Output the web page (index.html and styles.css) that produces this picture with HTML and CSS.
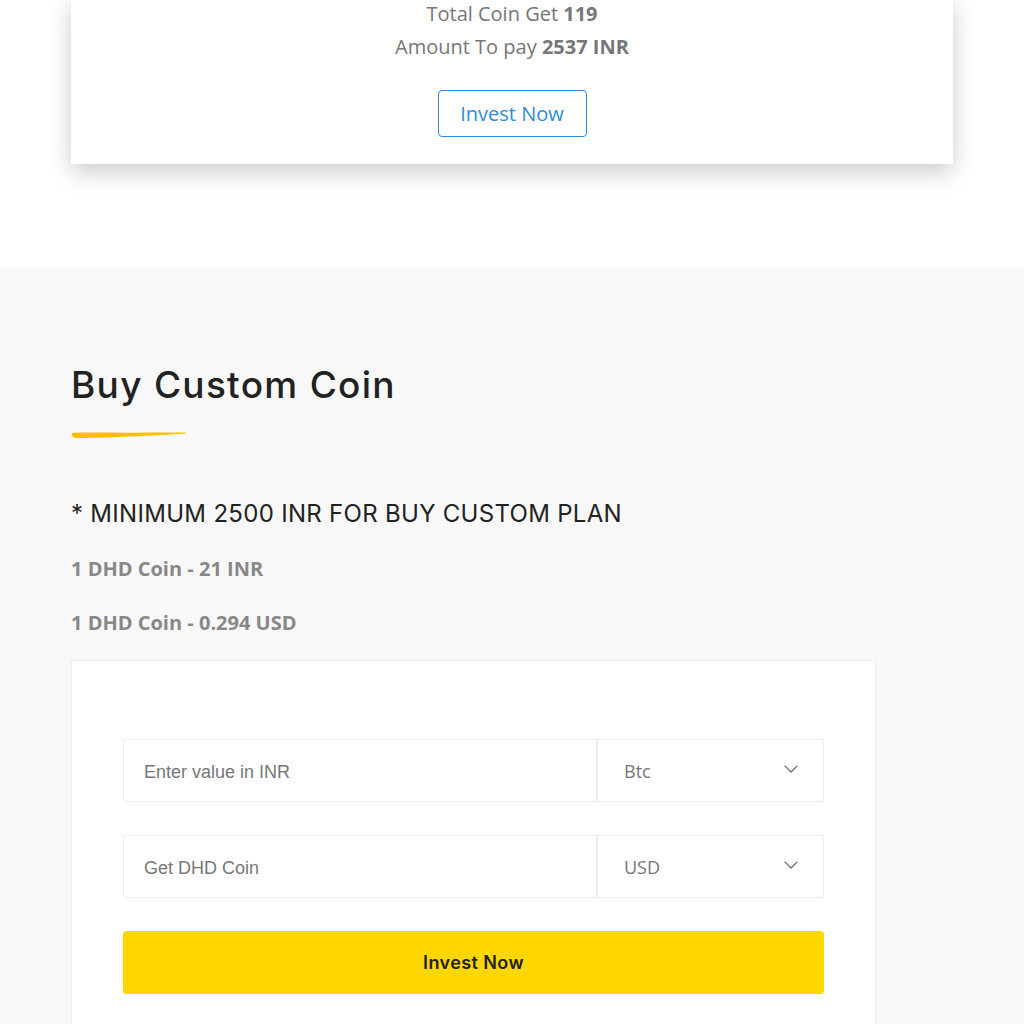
FILE: index.html
```html
<!DOCTYPE html>
<html>
<head>
<meta charset="utf-8">
<link rel="stylesheet" href="styles.css">
</head>
<body>
<section class="plans">
  <div class="container">
    <div class="plan-card">
      <p class="plan-line">Total Coin Get <b>119</b></p>
      <p class="plan-line">Amount To pay <b>2537 INR</b></p>
      <a class="btn-outline" href="#">Invest Now</a>
    </div>
  </div>
</section>
<section class="custom">
  <div class="container">
    <h2 class="title">Buy Custom Coin</h2>
    <svg class="brush" width="116" height="8" viewBox="0 0 116 8">
      <path d="M1 2.2 C 3 1.2, 20 1.4, 40 1.6 C 70 1.8, 95 1.2, 115 1.6 L 115 2.6 C 100 3.6, 80 4.6, 60 5.6 C 40 6.6, 20 7.2, 6 7 C 2 6.8, 0 5, 1 2.2 Z" fill="#ffbf00"/>
    </svg>
    <h3 class="notice">* MINIMUM 2500 INR FOR BUY CUSTOM PLAN</h3>
    <p class="rate">1 DHD Coin - 21 INR</p>
    <p class="rate">1 DHD Coin - 0.294 USD</p>
    <div class="form-box">
      <div class="form-row">
        <input class="field" type="text" placeholder="Enter value in INR">
        <div class="select"><span>Btc</span>
          <svg width="14" height="8" viewBox="0 0 14 8"><path d="M0.7 0.7 L7 7 L13.3 0.7" fill="none" stroke="#777" stroke-width="1.4"/></svg>
        </div>
      </div>
      <div class="form-row">
        <input class="field" type="text" placeholder="Get DHD Coin">
        <div class="select"><span>USD</span>
          <svg width="14" height="8" viewBox="0 0 14 8"><path d="M0.7 0.7 L7 7 L13.3 0.7" fill="none" stroke="#777" stroke-width="1.4"/></svg>
        </div>
      </div>
      <button class="btn-yellow" type="button">Invest Now</button>
    </div>
  </div>
</section>
</body>
</html>
```

FILE: styles.css
```css
* { box-sizing: border-box; }
html, body { margin: 0; padding: 0; background: #fff; overflow: hidden; }
body { font-family: "Open Sans", "Noto Sans", sans-serif; }

.container { width: 882px; margin: 0 auto; }

.plans { height: 267px; background: #fff; display: flow-root; }
.plan-card {
  margin-top: -3px;
  background: #fff;
  box-shadow: 0 8px 22px rgba(0,0,0,0.2);
  text-align: center;
  padding: 0 0 27px;
}
.plan-line {
  margin: 0;
  font-size: 20px;
  line-height: 33px;
  color: #777;
}
.plan-line b { font-weight: 700; color: #777; }
.btn-outline {
  display: inline-block;
  margin-top: 27px;
  width: 149px;
  height: 47px;
  line-height: 45px;
  border: 1px solid #2a8de0;
  border-radius: 4px;
  color: #2a8de0;
  font-size: 20px;
  text-decoration: none;
}

.custom {
  background: #f8f8f8;
  padding-top: 97px;
  height: 757px;
}
.title {
  margin: 0;
  font-family: Inter, "Noto Sans", sans-serif;
  font-weight: 500;
  font-size: 37px;
  line-height: 42px;
  color: #222;
  letter-spacing: 1.3px;
}
.brush { display: block; margin-top: 25px; }
.notice {
  margin: 59px 0 0;
  font-family: Inter, "Noto Sans", sans-serif;
  font-weight: 400;
  font-size: 24px;
  line-height: 32px;
  color: #222;
  letter-spacing: 0.3px;
}
.rate {
  margin: 0;
  font-size: 20px;
  font-weight: 700;
  color: #888;
  line-height: 28px;
}
.notice + .rate { margin-top: 25px; }
.rate + .rate { margin-top: 26px; }

.form-box {
  margin-top: 23px;
  width: 805px;
  background: #fff;
  border: 1px solid #eee;
  padding: 78px 51px 60px;
  display: flex;
  flex-direction: column;
  gap: 33px;
}
.form-row { display: flex; height: 63px; }
.field {
  flex: 0 0 474px;
  height: 63px;
  border: 1px solid #eee;
  padding: 3px 20px 0;
  font-family: "Liberation Sans", Arial, sans-serif;
  font-size: 18px;
  color: #333;
  background: #fff;
  outline: none;
}
.field::placeholder { color: #777; }
.select {
  flex: 1;
  height: 63px;
  border: 1px solid #eee;
  display: flex;
  align-items: center;
  justify-content: space-between;
  padding: 0 25px 0 26px;
  font-size: 18px;
  color: #777;
}
.select svg { margin-top: -3px; }
.btn-yellow {
  height: 63px;
  border: 0;
  border-radius: 4px;
  background: #ffd700;
  font-family: Inter, "Noto Sans", sans-serif;
  font-weight: 600;
  font-size: 18px;
  letter-spacing: 0.4px;
  color: #222;
  cursor: pointer;
}
```
